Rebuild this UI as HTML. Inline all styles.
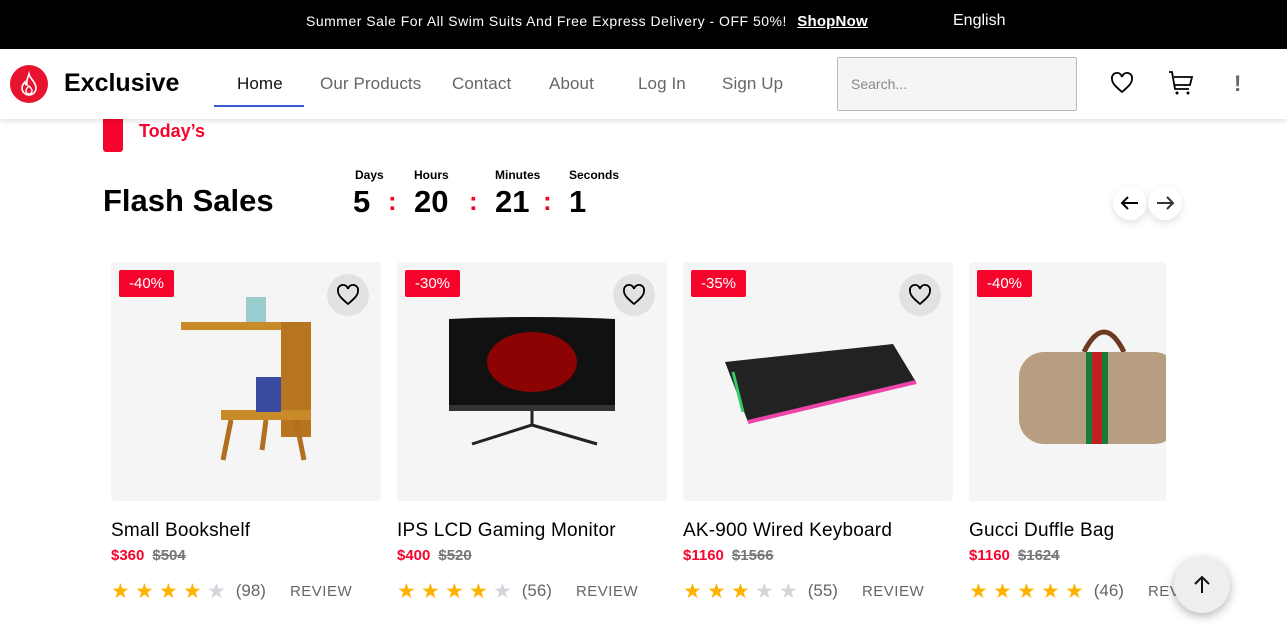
<!DOCTYPE html>
<html><head><meta charset="utf-8"><style>
*{margin:0;padding:0;box-sizing:border-box}
body{width:1287px;height:630px;overflow:hidden;background:#fff;font-family:"Liberation Sans",sans-serif;position:relative}
.top{position:absolute;left:0;top:0;width:1287px;height:49px;background:#000;color:#fff;font-size:14px}
.top .msg{position:absolute;left:306px;top:13px;letter-spacing:.5px}
.top .msg b{text-decoration:underline;margin-left:6px;font-size:15px;letter-spacing:.2px}
.top .lang{position:absolute;left:953px;top:12px;font-size:16px}
.nav{position:absolute;left:0;top:49px;width:1287px;height:70px;background:#fff;box-shadow:0 2px 5px rgba(0,0,0,.12);z-index:2}
.abs{position:absolute}
.logo{left:10px;top:16px;width:38px;height:38px;border-radius:50%;background:#e8132f}
.brand{left:64px;top:20px;font-size:25px;font-weight:bold;color:#000}
.nl{top:25px;font-size:17px;color:#666;letter-spacing:.1px}
.search{left:837px;top:8px;width:240px;height:54px;border:1px solid #bbb;border-radius:2px;background:#f5f5f5;font-size:14px;color:#888;padding:18px 13px}
.red{color:#f5052c}
.card{position:absolute;top:262px;width:270px;height:239px;background:#f5f5f5;border-radius:3px;overflow:hidden}
.badge{position:absolute;left:8px;top:8px;background:#f5052c;color:#fff;font-size:15px;padding:5px 10px;border-radius:2px}
.hrt{position:absolute;right:12px;top:12px;width:42px;height:42px;border-radius:50%;background:#e2e2e2}
.name{position:absolute;top:520px;font-size:19px;color:#000;letter-spacing:.2px}
.price{position:absolute;top:547px;font-size:15px;font-weight:bold}
.price s{color:#777;margin-left:8px}
.rate{position:absolute;top:581px;font-size:17px;color:#666;white-space:nowrap}
.st{color:#ffb300;font-size:21px;display:inline-block;width:24px;line-height:20px;vertical-align:-2px}
.st.g{color:#d4d6dc}
.rv{margin-left:24px;font-size:15px;letter-spacing:.5px}
</style></head><body>
<div class="top"><span class="msg">Summer Sale For All Swim Suits And Free Express Delivery - OFF 50%! <b>ShopNow</b></span><span class="lang">English</span></div>
<div class="nav">
<div class="abs logo"><svg width="38" height="38" viewBox="0 0 38 38"><path d="M19 9c1 5 7 8 7 14a7 7 0 0 1-14 0c0-3 2-5 3-6 0 2 1 3 2 3-1-4 1-8 2-11z" fill="none" stroke="#fff" stroke-width="1.6"/><path d="M19 21c2 2 3 3 3 5a3 3 0 0 1-6 0c0-2 1-3 3-5z" fill="none" stroke="#fff" stroke-width="1.4"/></svg></div>
<div class="abs brand">Exclusive</div>
<div class="abs nl" style="left:237px;color:#111">Home</div>
<div class="abs" style="left:214px;top:56px;width:90px;height:2px;background:#3a5bd0"></div>
<div class="abs nl" style="left:320px">Our Products</div>
<div class="abs nl" style="left:452px">Contact</div>
<div class="abs nl" style="left:549px">About</div>
<div class="abs nl" style="left:638px">Log In</div>
<div class="abs nl" style="left:722px">Sign Up</div>
<div class="abs search">Search...</div>
<svg class="abs" style="left:1110px;top:22px" width="24" height="24" viewBox="0 0 24 24"><path d="M12 21C5 15 2 12 2 8a5 5 0 0 1 10-2 5 5 0 0 1 10 2c0 4-3 7-10 13z" fill="none" stroke="#000" stroke-width="1.8"/></svg>
<svg class="abs" style="left:1168px;top:21px" width="26" height="26" viewBox="0 0 26 26"><path d="M1 2h3l3 17h14M6 7h18l-2 8H7" fill="none" stroke="#000" stroke-width="1.8"/><circle cx="9" cy="23" r="1.5"/><circle cx="20" cy="23" r="1.5"/></svg>
<div class="abs" style="left:1234px;top:22px;font-size:22px;font-weight:bold;color:#666">!</div>
</div>
<div class="abs" style="left:103px;top:112px;width:20px;height:40px;background:#f5052c;border-radius:3px"></div>
<div class="abs red" style="left:139px;top:121px;font-size:18px;font-weight:bold">Today’s</div>
<div class="abs" style="left:103px;top:183px;font-size:31px;font-weight:bold;color:#000">Flash Sales</div>
<div class="abs" style="left:355px;top:168px;font-size:12px;font-weight:bold">Days</div>
<div class="abs" style="left:414px;top:168px;font-size:12px;font-weight:bold">Hours</div>
<div class="abs" style="left:495px;top:168px;font-size:12px;font-weight:bold">Minutes</div>
<div class="abs" style="left:569px;top:168px;font-size:12px;font-weight:bold">Seconds</div>
<div class="abs" style="left:353px;top:184px;font-size:31px;font-weight:bold">5</div>
<div class="abs red" style="left:388px;top:186px;font-size:26px;font-weight:bold">:</div>
<div class="abs" style="left:414px;top:184px;font-size:31px;font-weight:bold">20</div>
<div class="abs red" style="left:469px;top:186px;font-size:26px;font-weight:bold">:</div>
<div class="abs" style="left:495px;top:184px;font-size:31px;font-weight:bold">21</div>
<div class="abs red" style="left:543px;top:186px;font-size:26px;font-weight:bold">:</div>
<div class="abs" style="left:569px;top:184px;font-size:31px;font-weight:bold">1</div>
<div class="abs" style="left:1113px;top:186px;width:34px;height:34px;border-radius:50%;background:#fff;box-shadow:0 3px 8px rgba(0,0,0,.12)"><svg width="34" height="34"><path d="M25 17H9M15 11l-6 6 6 6" fill="none" stroke="#000" stroke-width="2"/></svg></div>
<div class="abs" style="left:1148px;top:186px;width:34px;height:34px;border-radius:50%;background:#fff;box-shadow:0 3px 8px rgba(0,0,0,.12)"><svg width="34" height="34"><path d="M9 17h16M19 11l6 6-6 6" fill="none" stroke="#333" stroke-width="2"/></svg></div>

<div class="card" style="left:111px"><div class="badge">-40%</div><div class="hrt"><svg width="42" height="42" viewBox="-9 -9 42 42"><path d="M12 21C5 15 2 12 2 8a5 5 0 0 1 10-2 5 5 0 0 1 10 2c0 4-3 7-10 13z" fill="none" stroke="#000" stroke-width="1.8"/></svg></div>
<svg class="abs" style="left:60px;top:30px" width="150" height="180"><rect x="10" y="30" width="130" height="8" fill="#c98a2a"/><rect x="110" y="30" width="30" height="115" fill="#b87520"/><rect x="50" y="118" width="90" height="10" fill="#c98a2a"/><rect x="75" y="5" width="20" height="25" fill="#9cc"/><rect x="85" y="85" width="25" height="35" fill="#3a4aa0"/><path d="M60 128l-8 40M125 128l8 40M95 128l-4 30" stroke="#b07020" stroke-width="5"/></svg></div>
<div class="card" style="left:397px"><div class="badge">-30%</div><div class="hrt"><svg width="42" height="42" viewBox="-9 -9 42 42"><path d="M12 21C5 15 2 12 2 8a5 5 0 0 1 10-2 5 5 0 0 1 10 2c0 4-3 7-10 13z" fill="none" stroke="#000" stroke-width="1.8"/></svg></div>
<svg class="abs" style="left:50px;top:55px" width="170" height="130"><path d="M2 2Q85 -2 168 2V88H2z" fill="#111"/><ellipse cx="85" cy="45" rx="45" ry="30" fill="#a00" opacity=".8"/><rect x="2" y="88" width="166" height="6" fill="#333"/><path d="M85 94v14M25 127l60-19 65 19" stroke="#222" stroke-width="3" fill="none"/></svg></div>
<div class="card" style="left:683px"><div class="badge">-35%</div><div class="hrt"><svg width="42" height="42" viewBox="-9 -9 42 42"><path d="M12 21C5 15 2 12 2 8a5 5 0 0 1 10-2 5 5 0 0 1 10 2c0 4-3 7-10 13z" fill="none" stroke="#000" stroke-width="1.8"/></svg></div>
<svg class="abs" style="left:40px;top:80px" width="195" height="85"><path d="M2 20L170 2l23 38L25 80z" fill="#222"/><path d="M25 80L193 40" stroke="#e4a" stroke-width="4"/><path d="M10 30L20 70" stroke="#3c6" stroke-width="3"/></svg></div>
<div style="position:absolute;left:969px;top:262px;width:197px;height:239px;overflow:hidden"><div class="card" style="left:0;top:0"><div class="badge">-40%</div>
<svg class="abs" style="left:45px;top:55px" width="160" height="130"><path d="M70 35Q90 -5 110 35" stroke="#6b3a20" stroke-width="5" fill="none"/><rect x="5" y="35" width="160" height="92" rx="25" fill="#b89e80"/><rect x="72" y="35" width="22" height="92" fill="#1a7a3a"/><rect x="78" y="35" width="10" height="92" fill="#c02020"/></svg></div></div>

<div class="name" style="left:111px">Small Bookshelf</div>
<div class="price red" style="left:111px">$360<s>$504</s></div>
<div class="rate" style="left:111px"><span class="st">★</span><span class="st">★</span><span class="st">★</span><span class="st">★</span><span class="st g">★</span> (98)<span class="rv">REVIEW</span></div>
<div class="name" style="left:397px">IPS LCD Gaming Monitor</div>
<div class="price red" style="left:397px">$400<s>$520</s></div>
<div class="rate" style="left:397px"><span class="st">★</span><span class="st">★</span><span class="st">★</span><span class="st">★</span><span class="st g">★</span> (56)<span class="rv">REVIEW</span></div>
<div class="name" style="left:683px">AK-900 Wired Keyboard</div>
<div class="price red" style="left:683px">$1160<s>$1566</s></div>
<div class="rate" style="left:683px"><span class="st">★</span><span class="st">★</span><span class="st">★</span><span class="st g">★</span><span class="st g">★</span> (55)<span class="rv">REVIEW</span></div>
<div class="name" style="left:969px">Gucci Duffle Bag</div>
<div class="price red" style="left:969px">$1160<s>$1624</s></div>
<div class="rate" style="left:969px"><span class="st">★</span><span class="st">★</span><span class="st">★</span><span class="st">★</span><span class="st">★</span> (46)<span class="rv">REVIEW</span></div>
<div class="abs" style="left:1174px;top:557px;width:56px;height:56px;border-radius:50%;background:#eee;box-shadow:0 3px 10px rgba(0,0,0,.3)"><svg width="56" height="56"><path d="M28 36V20M21 27l7-7 7 7" fill="none" stroke="#111" stroke-width="2"/></svg></div>
</body></html>
